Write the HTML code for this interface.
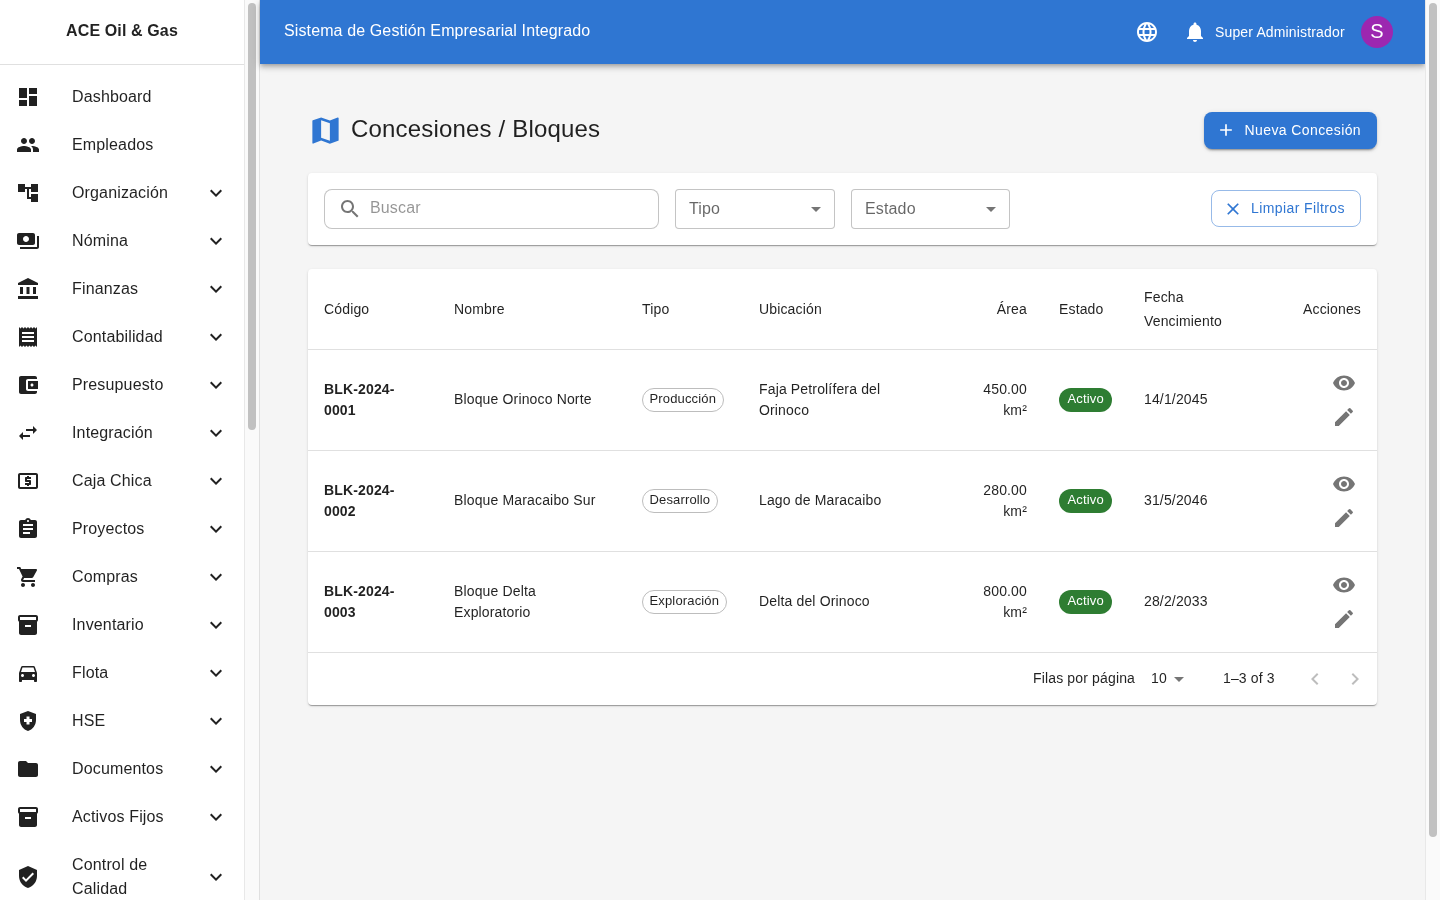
<!DOCTYPE html>
<html><head><meta charset="utf-8">
<style>
*{box-sizing:border-box}
html,body{margin:0;padding:0;width:1440px;height:900px;overflow:hidden;background:#f5f5f5;font-family:"Liberation Sans",sans-serif;color:rgba(0,0,0,0.87)}
.abs{position:absolute}
svg{display:block}
/* drawer */
#drawer{position:absolute;left:0;top:0;width:260px;height:900px;background:#fff;border-right:1px solid rgba(0,0,0,0.12);overflow:hidden}
#dhead{position:absolute;left:0;top:0;width:244px;height:65px;padding-bottom:2px;border-bottom:1px solid rgba(0,0,0,0.12);display:flex;align-items:center;justify-content:center;font-size:16px;font-weight:700;letter-spacing:0.12px}
#nav{position:absolute;left:0;top:73px;width:244px}
.ni{position:relative;height:48px;display:flex;align-items:center;padding:0 16px}
.ni svg.ic{width:24px;height:24px;fill:#212121;flex:none}
.ni .tx{position:absolute;left:72px;font-size:16px;line-height:24px;letter-spacing:0.15px}
.ni svg.ex{position:absolute;left:204px;top:12px;width:24px;height:24px;fill:#212121}
.ni.tall{height:72px}
.ni.tall svg.ex{top:24px}
.sbtrack{position:absolute;top:0;width:15px;height:900px;background:#fafafa;border-left:1px solid #e8e8e8}
.sbthumb{position:absolute;width:8px;background:#c1c1c1;border-radius:4px}
/* appbar */
#appbar{position:absolute;left:260px;top:0;width:1165px;height:64px;background:#2f76d2;color:#fff;box-shadow:0px 2px 4px -1px rgba(0,0,0,0.2),0px 4px 5px 0px rgba(0,0,0,0.14),0px 1px 10px 0px rgba(0,0,0,0.12);z-index:2}
#appbar .title{position:absolute;left:24px;top:19px;font-size:16px;line-height:24px;letter-spacing:0.12px}
#appbar svg{position:absolute;fill:#fff;width:24px;height:24px}
#appbar .user{position:absolute;left:955px;top:22px;font-size:14px;line-height:20px;letter-spacing:0.15px}
#appbar .avatar{position:absolute;left:1101px;top:16px;width:32px;height:32px;border-radius:50%;background:#9c27b0;color:#fff;font-size:20px;padding-bottom:2px;display:flex;align-items:center;justify-content:center}
/* main */
#main{position:absolute;left:260px;top:0;width:1165px;height:900px}
.paper{position:absolute;background:#fff;border-radius:4px;box-shadow:0px 2px 1px -1px rgba(0,0,0,0.2),0px 1px 1px 0px rgba(0,0,0,0.14),0px 1px 3px 0px rgba(0,0,0,0.12)}
.h5{position:absolute;font-size:24px;line-height:32px;letter-spacing:0.176px}
.btn{position:absolute;display:flex;align-items:center;font-size:14px;letter-spacing:0.4px;border-radius:8px}
.field{position:absolute;height:40px;border:1px solid rgba(0,0,0,0.23);background:#fff}
table{border-collapse:collapse;position:absolute;left:0;top:0;width:1069px;table-layout:fixed}
th,td{padding:16px;font-size:14px;letter-spacing:0.15px;text-align:left;border-bottom:1px solid rgba(224,224,224,1);vertical-align:middle}
th{font-weight:400;line-height:24px}
td{line-height:21px}
td.r,th.r{text-align:right}
.chip{display:inline-flex;align-items:center;height:24px;border-radius:12px;font-size:13px;padding:0 7px;letter-spacing:0.15px;vertical-align:middle}
.chip span{position:relative;top:-2px}
.chip.o{border:1px solid #bdbdbd;padding:0 6.5px}
.chip.g{background:#2e7d32;color:#fff;padding:0 8px 0 8.5px}
.chip.g span{top:-1.5px}
.s{position:relative;top:-1px}
.act{display:flex;flex-direction:column;align-items:flex-end}
.act div{width:34px;height:34px;display:flex;align-items:center;justify-content:center}
.act svg{width:24px;height:24px;fill:rgba(0,0,0,0.54)}
#root{position:relative;width:1440px;height:900px;overflow:hidden;background:#f5f5f5;will-change:transform}
</style></head><body><div id="root">

<div id="drawer">
  <div id="dhead">ACE Oil &amp; Gas</div>
  <div id="nav">
    <div class="ni"><svg class="ic" viewBox="0 0 24 24"><path d="M3 13h8V3H3v10zm0 8h8v-6H3v6zm10 0h8V11h-8v10zm0-18v6h8V3h-8z"/></svg><span class="tx">Dashboard</span></div>
    <div class="ni"><svg class="ic" viewBox="0 0 24 24"><path d="M16 11c1.66 0 2.99-1.34 2.99-3S17.66 5 16 5c-1.66 0-3 1.34-3 3s1.34 3 3 3zm-8 0c1.66 0 2.99-1.34 2.99-3S9.66 5 8 5C6.34 5 5 6.34 5 8s1.34 3 3 3zm0 2c-2.33 0-7 1.17-7 3.5V19h14v-2.5c0-2.33-4.67-3.5-7-3.5zm8 0c-.29 0-.62.02-.97.05 1.16.84 1.97 1.97 1.97 3.45V19h6v-2.5c0-2.33-4.67-3.5-7-3.5z"/></svg><span class="tx">Empleados</span></div>
    <div class="ni"><svg class="ic" viewBox="0 0 24 24"><path d="M22 11V3h-7v3H9V3H2v8h7V8h2v10h4v3h7v-8h-7v3h-2V8h2v3z"/></svg><span class="tx">Organización</span><svg class="ex" viewBox="0 0 24 24"><path d="M16.59 8.59 12 13.17 7.41 8.59 6 10l6 6 6-6z"/></svg></div>
    <div class="ni"><svg class="ic" viewBox="0 0 24 24"><path d="M19 14V6c0-1.1-.9-2-2-2H3c-1.1 0-2 .9-2 2v8c0 1.1.9 2 2 2h14c1.1 0 2-.9 2-2zm-9-1c-1.66 0-3-1.34-3-3s1.34-3 3-3 3 1.34 3 3-1.34 3-3 3zm13-6v11c0 1.1-.9 2-2 2H4v-2h17V7h2z"/></svg><span class="tx">Nómina</span><svg class="ex" viewBox="0 0 24 24"><path d="M16.59 8.59 12 13.17 7.41 8.59 6 10l6 6 6-6z"/></svg></div>
    <div class="ni"><svg class="ic" viewBox="0 0 24 24"><path d="M4 10h3v7H4zm6.5 0h3v7h-3zM2 19h20v3H2zm15-9h3v7h-3zm-5-9L2 6v2h20V6z"/></svg><span class="tx">Finanzas</span><svg class="ex" viewBox="0 0 24 24"><path d="M16.59 8.59 12 13.17 7.41 8.59 6 10l6 6 6-6z"/></svg></div>
    <div class="ni"><svg class="ic" viewBox="0 0 24 24"><path d="M18 17H6v-2h12v2zm0-4H6v-2h12v2zm0-4H6V7h12v2zM3 22l1.5-1.5L6 22l1.5-1.5L9 22l1.5-1.5L12 22l1.5-1.5L15 22l1.5-1.5L18 22l1.5-1.5L21 22V2l-1.5 1.5L18 2l-1.5 1.5L15 2l-1.5 1.5L12 2l-1.5 1.5L9 2 7.5 3.5 6 2 4.5 3.5 3 2v20z"/></svg><span class="tx">Contabilidad</span><svg class="ex" viewBox="0 0 24 24"><path d="M16.59 8.59 12 13.17 7.41 8.59 6 10l6 6 6-6z"/></svg></div>
    <div class="ni"><svg class="ic" viewBox="0 0 24 24"><path d="M21 18v1c0 1.1-.9 2-2 2H5c-1.11 0-2-.9-2-2V5c0-1.1.89-2 2-2h14c1.1 0 2 .9 2 2v1h-9c-1.11 0-2 .9-2 2v8c0 1.1.89 2 2 2h9zm-9-2h10V8H12v8zm4-2.5c-.83 0-1.5-.67-1.5-1.5s.67-1.5 1.5-1.5 1.5.67 1.5 1.5-.67 1.5-1.5 1.5z"/></svg><span class="tx">Presupuesto</span><svg class="ex" viewBox="0 0 24 24"><path d="M16.59 8.59 12 13.17 7.41 8.59 6 10l6 6 6-6z"/></svg></div>
    <div class="ni"><svg class="ic" viewBox="0 0 24 24"><path d="M6.99 11 3 15l3.99 4v-3H14v-2H6.99v-3zM21 9l-3.99-4v3H10v2h7.01v3L21 9z"/></svg><span class="tx">Integración</span><svg class="ex" viewBox="0 0 24 24"><path d="M16.59 8.59 12 13.17 7.41 8.59 6 10l6 6 6-6z"/></svg></div>
    <div class="ni"><svg class="ic" viewBox="0 0 24 24"><path d="M11 17h2v-1h1c.55 0 1-.45 1-1v-3c0-.55-.45-1-1-1h-3v-1h4V8h-2V7h-2v1h-1c-.55 0-1 .45-1 1v3c0 .55.45 1 1 1h3v1H9v2h2v1zm9-13H4c-1.11 0-1.99.89-1.99 2L2 18c0 1.11.89 2 2 2h16c1.11 0 2-.89 2-2V6c0-1.11-.89-2-2-2zm0 14H4V6h16v12z"/></svg><span class="tx">Caja Chica</span><svg class="ex" viewBox="0 0 24 24"><path d="M16.59 8.59 12 13.17 7.41 8.59 6 10l6 6 6-6z"/></svg></div>
    <div class="ni"><svg class="ic" viewBox="0 0 24 24"><path d="M19 3h-4.18C14.4 1.84 13.3 1 12 1c-1.3 0-2.4.84-2.82 2H5c-1.1 0-2 .9-2 2v14c0 1.1.9 2 2 2h14c1.1 0 2-.9 2-2V5c0-1.1-.9-2-2-2zm-7 0c.55 0 1 .45 1 1s-.45 1-1 1-1-.45-1-1 .45-1 1-1zm2 14H7v-2h7v2zm3-4H7v-2h10v2zm0-4H7V7h10v2z"/></svg><span class="tx">Proyectos</span><svg class="ex" viewBox="0 0 24 24"><path d="M16.59 8.59 12 13.17 7.41 8.59 6 10l6 6 6-6z"/></svg></div>
    <div class="ni"><svg class="ic" viewBox="0 0 24 24"><path d="M7 18c-1.1 0-1.99.9-1.99 2S5.9 22 7 22s2-.9 2-2-.9-2-2-2zM1 2v2h2l3.6 7.59-1.35 2.45c-.16.28-.25.61-.25.96 0 1.1.9 2 2 2h12v-2H7.42c-.14 0-.25-.11-.25-.25l.03-.12.9-1.63h7.45c.75 0 1.41-.41 1.75-1.03l3.58-6.49c.08-.14.12-.31.12-.48 0-.55-.45-1-1-1H5.21l-.94-2H1zm16 16c-1.1 0-1.99.9-1.99 2s.89 2 1.99 2 2-.9 2-2-.9-2-2-2z"/></svg><span class="tx">Compras</span><svg class="ex" viewBox="0 0 24 24"><path d="M16.59 8.59 12 13.17 7.41 8.59 6 10l6 6 6-6z"/></svg></div>
    <div class="ni"><svg class="ic" viewBox="0 0 24 24"><path d="M20 2H4c-1 0-2 .9-2 2v3.01c0 .72.43 1.34 1 1.69V20c0 1.1 1.1 2 2 2h14c.9 0 2-.9 2-2V8.7c.57-.35 1-.97 1-1.69V4c0-1.1-1-2-2-2zm-5 12H9v-2h6v2zm5-7H4V4l16-.02V7z"/></svg><span class="tx">Inventario</span><svg class="ex" viewBox="0 0 24 24"><path d="M16.59 8.59 12 13.17 7.41 8.59 6 10l6 6 6-6z"/></svg></div>
    <div class="ni"><svg class="ic" viewBox="0 0 24 24"><path d="M18.92 6.01C18.72 5.42 18.16 5 17.5 5h-11c-.66 0-1.21.42-1.42 1.01L3 12v8c0 .55.45 1 1 1h1c.55 0 1-.45 1-1v-1h12v1c0 .55.45 1 1 1h1c.55 0 1-.45 1-1v-8l-2.08-5.99zM6.5 16c-.83 0-1.5-.67-1.5-1.5S5.67 13 6.5 13s1.5.67 1.5 1.5S7.33 16 6.5 16zm11 0c-.83 0-1.5-.67-1.5-1.5s.67-1.5 1.5-1.5 1.5.67 1.5 1.5-.67 1.5-1.5 1.5zM5 11l1.5-4.5h11L19 11H5z"/></svg><span class="tx">Flota</span><svg class="ex" viewBox="0 0 24 24"><path d="M16.59 8.59 12 13.17 7.41 8.59 6 10l6 6 6-6z"/></svg></div>
    <div class="ni"><svg class="ic" viewBox="0 0 24 24"><path d="M10.5 13H8v-3h2.5V7.5h3V10H16v3h-2.5v2.5h-3V13zM12 2 4 5v6.09c0 5.05 3.41 9.76 8 10.91 4.59-1.15 8-5.86 8-10.91V5l-8-3z"/></svg><span class="tx">HSE</span><svg class="ex" viewBox="0 0 24 24"><path d="M16.59 8.59 12 13.17 7.41 8.59 6 10l6 6 6-6z"/></svg></div>
    <div class="ni"><svg class="ic" viewBox="0 0 24 24"><path d="M10 4H4c-1.1 0-1.99.9-1.99 2L2 18c0 1.1.9 2 2 2h16c1.1 0 2-.9 2-2V8c0-1.1-.9-2-2-2h-8l-2-2z"/></svg><span class="tx">Documentos</span><svg class="ex" viewBox="0 0 24 24"><path d="M16.59 8.59 12 13.17 7.41 8.59 6 10l6 6 6-6z"/></svg></div>
    <div class="ni"><svg class="ic" viewBox="0 0 24 24"><path d="M20 2H4c-1 0-2 .9-2 2v3.01c0 .72.43 1.34 1 1.69V20c0 1.1 1.1 2 2 2h14c.9 0 2-.9 2-2V8.7c.57-.35 1-.97 1-1.69V4c0-1.1-1-2-2-2zm-5 12H9v-2h6v2zm5-7H4V4l16-.02V7z"/></svg><span class="tx">Activos Fijos</span><svg class="ex" viewBox="0 0 24 24"><path d="M16.59 8.59 12 13.17 7.41 8.59 6 10l6 6 6-6z"/></svg></div>
    <div class="ni tall"><svg class="ic" viewBox="0 0 24 24"><path d="M12 1 3 5v6c0 5.55 3.84 10.74 9 12 5.16-1.26 9-6.45 9-12V5l-9-4zm-2 16-4-4 1.41-1.41L10 14.17l6.59-6.59L18 9l-8 8z"/></svg><span class="tx">Control de<br>Calidad</span><svg class="ex" viewBox="0 0 24 24"><path d="M16.59 8.59 12 13.17 7.41 8.59 6 10l6 6 6-6z"/></svg></div>
  </div>
  <div class="sbtrack" style="left:244px"><div class="sbthumb" style="left:3px;top:3px;height:427px"></div></div>
</div>

<div id="main">
  <div class="abs" style="left:48px;top:113px;width:35px;height:35px"><svg viewBox="0 0 24 24" width="35" height="35" style="fill:#2f76d2"><path d="M20.5 3l-.16.03L15 5.1 9 3 3.36 4.9c-.21.07-.36.25-.36.48V20.5c0 .28.22.5.5.5l.16-.03L9 18.9l6 2.1 5.64-1.9c.21-.07.36-.25.36-.48V3.5c0-.28-.22-.5-.5-.5zM15 19l-6-2.11V5l6 2.11V19z"/></svg></div>
  <div class="h5" style="left:91px;top:113px">Concesiones / Bloques</div>
  <div class="btn" style="left:944px;top:112px;width:173px;height:37px;background:#2f76d2;color:#fff;box-shadow:0px 3px 1px -2px rgba(0,0,0,0.2),0px 2px 2px 0px rgba(0,0,0,0.14),0px 1px 5px 0px rgba(0,0,0,0.12)">
    <svg viewBox="0 0 24 24" width="20" height="20" style="fill:#fff;position:absolute;left:12px;top:8px"><path d="M19 13h-6v6h-2v-6H5v-2h6V5h2v6h6v2z"/></svg>
    <span style="position:absolute;left:40.5px;top:8px;line-height:21px">Nueva Concesión</span>
  </div>

  <div class="paper" style="left:48px;top:173px;width:1069px;height:72px">
    <div class="field" style="left:16px;top:16px;width:335px;border-radius:8px">
      <svg viewBox="0 0 24 24" width="24" height="24" style="position:absolute;left:13px;top:7px;fill:rgba(0,0,0,0.54)"><path d="M15.5 14h-.79l-.28-.27C15.41 12.59 16 11.11 16 9.5 16 5.91 13.09 3 9.5 3S3 5.91 3 9.5 5.91 16 9.5 16c1.61 0 3.09-.59 4.23-1.57l.27.28v.79l5 4.99L20.49 19l-4.99-5zm-6 0C7.01 14 5 11.99 5 9.5S7.01 5 9.5 5 14 7.01 14 9.5 11.99 14 9.5 14z"/></svg>
      <span class="abs" style="left:45px;top:6px;font-size:16px;line-height:23px;color:rgba(0,0,0,0.42);letter-spacing:0.15px">Buscar</span>
    </div>
    <div class="field" style="left:367px;top:16px;width:160px;border-radius:4px">
      <span class="abs" style="left:13px;top:7px;font-size:16px;line-height:23px;color:rgba(0,0,0,0.6);letter-spacing:0.15px">Tipo</span>
      <svg viewBox="0 0 24 24" width="24" height="24" style="position:absolute;right:6px;top:7px;fill:rgba(0,0,0,0.54)"><path d="M7 10l5 5 5-5z"/></svg>
    </div>
    <div class="field" style="left:543px;top:16px;width:159px;border-radius:4px">
      <span class="abs" style="left:13px;top:7px;font-size:16px;line-height:23px;color:rgba(0,0,0,0.6);letter-spacing:0.15px">Estado</span>
      <svg viewBox="0 0 24 24" width="24" height="24" style="position:absolute;right:6px;top:7px;fill:rgba(0,0,0,0.54)"><path d="M7 10l5 5 5-5z"/></svg>
    </div>
    <div class="btn" style="left:903px;top:17px;width:150px;height:37px;border:1px solid rgba(47,118,210,0.5);color:#2f76d2">
      <svg viewBox="0 0 24 24" width="20" height="20" style="fill:#2f76d2;position:absolute;left:11px;top:8px"><path d="M19 6.41 17.59 5 12 10.59 6.41 5 5 6.41 10.59 12 5 17.59 6.41 19 12 13.41 17.59 19 19 17.59 13.41 12z"/></svg>
      <span style="position:absolute;left:39px;top:7px;line-height:21px">Limpiar Filtros</span>
    </div>
  </div>

  <div class="paper" style="left:48px;top:269px;width:1069px;height:436px;overflow:hidden">
    <table>
      <colgroup><col style="width:130px"><col style="width:188px"><col style="width:117px"><col style="width:224px"><col style="width:76px"><col style="width:85px"><col style="width:159px"><col style="width:90px"></colgroup>
      <thead><tr style="height:80px"><th>Código</th><th>Nombre</th><th>Tipo</th><th>Ubicación</th><th class="r">Área</th><th>Estado</th><th>Fecha<br>Vencimiento</th><th class="r">Acciones</th></tr></thead>
      <tbody>
        <tr style="height:101px"><td><b>BLK-2024-<br>0001</b></td><td><span class="s">Bloque Orinoco Norte</span></td><td><span class="chip o"><span>Producción</span></span></td><td>Faja Petrolífera del<br>Orinoco</td><td class="r">450.00<br>km²</td><td><span class="chip g"><span>Activo</span></span></td><td><span class="s">14/1/2045</span></td><td class="r" style="padding-top:16px;padding-bottom:16px"><div class="act"><div><svg viewBox="0 0 24 24"><path d="M12 4.5C7 4.5 2.73 7.61 1 12c1.73 4.39 6 7.5 11 7.5s9.27-3.11 11-7.5c-1.73-4.39-6-7.5-11-7.5zM12 17c-2.76 0-5-2.24-5-5s2.24-5 5-5 5 2.24 5 5-2.24 5-5 5zm0-8c-1.66 0-3 1.34-3 3s1.34 3 3 3 3-1.34 3-3-1.34-3-3-3z"/></svg></div><div><svg viewBox="0 0 24 24"><path d="M3 17.25V21h3.75L17.81 9.94l-3.75-3.75L3 17.25zM20.71 7.04c.39-.39.39-1.02 0-1.41l-2.34-2.34a.9959.9959 0 0 0-1.41 0l-1.83 1.83 3.75 3.75 1.83-1.83z"/></svg></div></div></td></tr>
        <tr style="height:101px"><td><b>BLK-2024-<br>0002</b></td><td><span class="s">Bloque Maracaibo Sur</span></td><td><span class="chip o"><span>Desarrollo</span></span></td><td><span class="s">Lago de Maracaibo</span></td><td class="r">280.00<br>km²</td><td><span class="chip g"><span>Activo</span></span></td><td><span class="s">31/5/2046</span></td><td class="r"><div class="act"><div><svg viewBox="0 0 24 24"><path d="M12 4.5C7 4.5 2.73 7.61 1 12c1.73 4.39 6 7.5 11 7.5s9.27-3.11 11-7.5c-1.73-4.39-6-7.5-11-7.5zM12 17c-2.76 0-5-2.24-5-5s2.24-5 5-5 5 2.24 5 5-2.24 5-5 5zm0-8c-1.66 0-3 1.34-3 3s1.34 3 3 3 3-1.34 3-3-1.34-3-3-3z"/></svg></div><div><svg viewBox="0 0 24 24"><path d="M3 17.25V21h3.75L17.81 9.94l-3.75-3.75L3 17.25zM20.71 7.04c.39-.39.39-1.02 0-1.41l-2.34-2.34a.9959.9959 0 0 0-1.41 0l-1.83 1.83 3.75 3.75 1.83-1.83z"/></svg></div></div></td></tr>
        <tr style="height:101px"><td><b>BLK-2024-<br>0003</b></td><td>Bloque Delta<br>Exploratorio</td><td><span class="chip o"><span>Exploración</span></span></td><td><span class="s">Delta del Orinoco</span></td><td class="r">800.00<br>km²</td><td><span class="chip g"><span>Activo</span></span></td><td><span class="s">28/2/2033</span></td><td class="r"><div class="act"><div><svg viewBox="0 0 24 24"><path d="M12 4.5C7 4.5 2.73 7.61 1 12c1.73 4.39 6 7.5 11 7.5s9.27-3.11 11-7.5c-1.73-4.39-6-7.5-11-7.5zM12 17c-2.76 0-5-2.24-5-5s2.24-5 5-5 5 2.24 5 5-2.24 5-5 5zm0-8c-1.66 0-3 1.34-3 3s1.34 3 3 3 3-1.34 3-3-1.34-3-3-3z"/></svg></div><div><svg viewBox="0 0 24 24"><path d="M3 17.25V21h3.75L17.81 9.94l-3.75-3.75L3 17.25zM20.71 7.04c.39-.39.39-1.02 0-1.41l-2.34-2.34a.9959.9959 0 0 0-1.41 0l-1.83 1.83 3.75 3.75 1.83-1.83z"/></svg></div></div></td></tr>
      </tbody>
    </table>
    <div class="abs" style="left:0;top:384px;width:1069px;height:52px;font-size:14px;letter-spacing:0.15px">
      <span class="abs" style="left:725px;top:15px;line-height:20px">Filas por página</span>
      <span class="abs" style="left:843px;top:15px;line-height:20px">10</span>
      <svg viewBox="0 0 24 24" width="24" height="24" style="position:absolute;left:859px;top:14px;fill:rgba(0,0,0,0.54)"><path d="M7 10l5 5 5-5z"/></svg>
      <span class="abs" style="left:915px;top:15px;line-height:20px">1–3 of 3</span>
      <svg viewBox="0 0 24 24" width="24" height="24" style="position:absolute;left:995px;top:14px;fill:rgba(0,0,0,0.26)"><path d="M15.41 7.41 14 6l-6 6 6 6 1.41-1.41L10.83 12z"/></svg>
      <svg viewBox="0 0 24 24" width="24" height="24" style="position:absolute;left:1035px;top:14px;fill:rgba(0,0,0,0.26)"><path d="M8.59 16.59 13.17 12 8.59 7.41 10 6l6 6-6 6-1.41-1.41z"/></svg>
    </div>
  </div>
</div>

<div id="appbar">
  <div class="title">Sistema de Gestión Empresarial Integrado</div>
  <svg viewBox="0 0 24 24" style="left:875px;top:20px"><path d="M11.99 2C6.47 2 2 6.48 2 12s4.47 10 9.99 10C17.52 22 22 17.52 22 12S17.52 2 11.99 2zm6.93 6h-2.95c-.32-1.25-.78-2.45-1.38-3.56 1.84.63 3.37 1.91 4.33 3.56zM12 4.04c.83 1.2 1.48 2.53 1.91 3.96h-3.82c.43-1.43 1.08-2.76 1.91-3.96zM4.26 14C4.1 13.36 4 12.69 4 12s.1-1.36.26-2h3.38c-.08.66-.14 1.32-.14 2 0 .68.06 1.34.14 2H4.26zm.82 2h2.95c.32 1.25.78 2.45 1.38 3.56-1.84-.63-3.37-1.9-4.33-3.56zm2.95-8H5.08c.96-1.66 2.49-2.93 4.33-3.56C8.81 5.55 8.35 6.75 8.03 8zM12 19.96c-.83-1.2-1.48-2.53-1.91-3.96h3.82c-.43 1.43-1.08 2.76-1.91 3.96zM14.34 14H9.66c-.09-.66-.16-1.32-.16-2 0-.68.07-1.35.16-2h4.68c.09.65.16 1.32.16 2 0 .68-.07 1.34-.16 2zm.25 5.56c.6-1.11 1.06-2.31 1.38-3.56h2.95c-.96 1.65-2.49 2.93-4.33 3.56zM16.36 14c.08-.66.14-1.32.14-2 0-.68-.06-1.34-.14-2h3.38c.16.64.26 1.31.26 2s-.1 1.36-.26 2h-3.38z"/></svg>
  <svg viewBox="0 0 24 24" style="left:923px;top:20px"><path d="M12 22c1.1 0 2-.9 2-2h-4c0 1.1.89 2 2 2zm6-6v-5c0-3.07-1.64-5.64-4.5-6.32V4c0-.83-.67-1.5-1.5-1.5s-1.5.67-1.5 1.5v.68C7.63 5.36 6 7.92 6 11v5l-2 2v1h16v-1l-2-2z"/></svg>
  <div class="user">Super Administrador</div>
  <div class="avatar">S</div>
</div>

<div class="sbtrack" style="left:1425px;z-index:3"><div class="sbthumb" style="left:3px;top:3px;height:834px"></div></div>
</div></body></html>
